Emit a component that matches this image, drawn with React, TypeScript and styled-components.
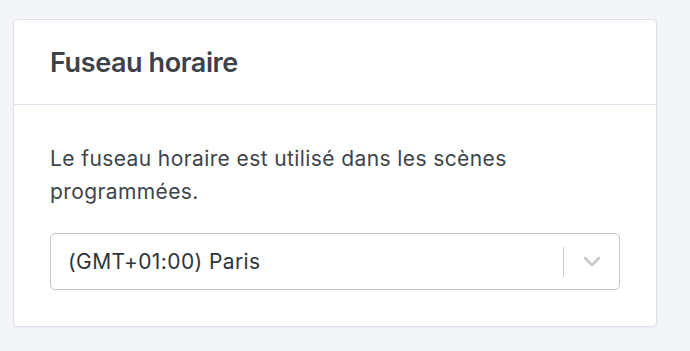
import React from "react";
import styled, { createGlobalStyle } from "styled-components";

const Global = createGlobalStyle`
  html, body { margin: 0; padding: 0; background: #f4f5f9; }
  body { font-family: Inter, "Noto Sans", sans-serif; -webkit-font-smoothing: antialiased; }
`;

const Page = styled.div`
  width: 690px;
  height: 351px;
  box-sizing: border-box;
  padding: 19px 33px 0 13px;
  background: #f4f5f9;
`;

const Card = styled.section`
  box-sizing: border-box;
  width: 644px;
  height: 308px;
  background: #ffffff;
  border: 1px solid #dfe0ea;
  border-radius: 4px;
  box-shadow: 0 1px 2px rgba(40, 45, 80, 0.06);
  display: flex;
  flex-direction: column;
`;

const Header = styled.header`
  height: 85px;
  box-sizing: border-box;
  border-bottom: 1px solid #e1e0ef;
  display: flex;
  align-items: center;
  padding: 0 36px;
`;

const Title = styled.h2`
  margin: 0;
  font-size: 27px;
  font-weight: 600;
  color: #3c4248;
  letter-spacing: -0.4px;
`;

const Body = styled.div`
  padding: 37px 36px 0;
  display: flex;
  flex-direction: column;
  gap: 25px;
`;

const Text = styled.p`
  margin: 0;
  font-size: 21px;
  line-height: 33px;
  letter-spacing: 0.4px;
  color: #3e444a;
  font-weight: 400;
`;

const Select = styled.div`
  box-sizing: border-box;
  width: 570px;
  height: 57px;
  border: 1px solid #c6c6c8;
  border-radius: 5px;
  display: flex;
  align-items: center;
  padding-left: 17px;
`;

const Value = styled.span`
  flex: 1;
  font-size: 21px;
  letter-spacing: 0.4px;
  color: #2f3439;
`;

const Separator = styled.span`
  width: 1px;
  height: 30px;
  background: #cccccc;
`;

const Indicator = styled.span`
  width: 55px;
  display: flex;
  align-items: center;
  justify-content: center;
  color: #c8c8c8;
`;

export default function App() {
  return (
    <>
      <Global />
      <Page>
        <Card>
          <Header>
            <Title>Fuseau horaire</Title>
          </Header>
          <Body>
            <Text>Le fuseau horaire est utilisé dans les scènes programmées.</Text>
            <Select>
              <Value>(GMT+01:00) Paris</Value>
              <Separator />
              <Indicator>
                <svg width="20" height="12" viewBox="0 0 20 12">
                  <path d="M3 2 L10 9 L17 2" fill="none" stroke="currentColor" strokeWidth="2.6" strokeLinecap="round" strokeLinejoin="round" />
                </svg>
              </Indicator>
            </Select>
          </Body>
        </Card>
      </Page>
    </>
  );
}
